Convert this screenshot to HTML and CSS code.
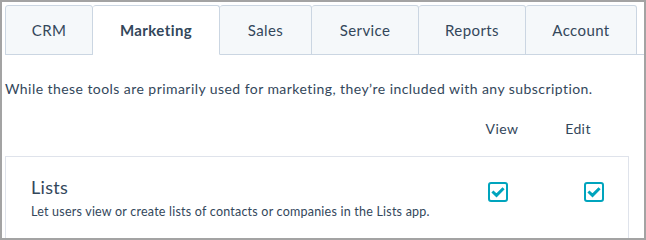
FILE: index.html
```
<html>
<head>
	<title>Permissions</title>
	<link rel="stylesheet" href="styles.css">
</head>
<body>

<div class="frame">
	<div class="tabs">
		<div class="tab">CRM</div>
		<div class="tab active">Marketing</div>
		<div class="tab">Sales</div>
		<div class="tab">Service</div>
		<div class="tab">Reports</div>
		<div class="tab">Account</div>
	</div>

	<p class="intro">While these tools are primarily used for marketing, they&rsquo;re included with any subscription.</p>

	<div class="colhead">
		<span>View</span>
		<span>Edit</span>
	</div>

	<div class="perm">
		<div class="perm-text">
			<div class="perm-name">Lists</div>
			<div class="perm-desc">Let users view or create lists of contacts or companies in the Lists app.</div>
		</div>
		<div class="perm-boxes">
			<span class="check"><svg viewBox="0 0 16 16" width="16" height="16"><polyline points="3.5,8.5 6.5,11.3 12.5,5.3" /></svg></span>
			<span class="check"><svg viewBox="0 0 16 16" width="16" height="16"><polyline points="3.5,8.5 6.5,11.3 12.5,5.3" /></svg></span>
		</div>
	</div>
</div>

</body>
</html>
```

FILE: styles.css
```
body {
	margin: 0;
	font-family: "Lato", "Liberation Sans", sans-serif;
	color: #33475b;
}

.frame {
	box-sizing: border-box;
	height: 240px;
	border: 2px solid #a3a3a3;
	padding-top: 3px;
	padding-left: 3px;
	overflow: hidden;
}

/* tab strip */
.tabs {
	display: grid;
	grid-template-columns: 88px 127px 92px 107px 107px 111px;
	border-bottom: 1px solid #cbd6e2;
	height: 49px;
}
.tab {
	box-sizing: border-box;
	height: 50px;
	display: flex;
	align-items: center;
	justify-content: center;
	background-color: #f5f8fa;
	border: 1px solid #cbd6e2;
	border-left: none;
	border-radius: 3px 3px 0 0;
	font-size: 15px;
	letter-spacing: 0.4px;
}
.tab:first-child { border-left: 1px solid #cbd6e2; }
.tab.active {
	background-color: #fff;
	border-bottom-color: #fff;
	font-weight: bold;
}

.intro {
	margin: 24px 0 0 0;
	font-size: 14px;
	line-height: 20px;
	letter-spacing: 0.44px;
}

.colhead {
	display: flex;
	justify-content: flex-end;
	gap: 16px;
	margin: 20px 36px 0 0;
	font-size: 14px;
	line-height: 20px;
	letter-spacing: 0.4px;
}
.colhead span {
	width: 60px;
	text-align: center;
}

/* permission card */
.perm {
	display: flex;
	align-items: flex-start;
	margin: 17px 15px 0 0;
	height: 100px;
	border: 1px solid #dfe3eb;
	border-bottom: none;
	padding: 0 14px 0 25px;
	box-sizing: border-box;
}
.perm-text { flex: 1; padding-top: 18px; }
.perm-name {
	font-size: 18px;
	line-height: 24px;
	letter-spacing: 0.3px;
}
.perm-desc {
	font-size: 12.5px;
	line-height: 18px;
	margin-top: 4px;
	letter-spacing: 0.22px;
}
.perm-boxes {
	display: flex;
	gap: 56px;
	padding-top: 25px;
}
.perm-boxes .check {
	width: 40px;
	display: flex;
	justify-content: center;
}
.check svg {
	box-sizing: border-box;
	width: 20px;
	height: 20px;
	border: 2px solid #00a4bd;
	border-radius: 3px;
	fill: none;
	stroke: #00a4bd;
	stroke-width: 3;
	stroke-linecap: square;
}
```
